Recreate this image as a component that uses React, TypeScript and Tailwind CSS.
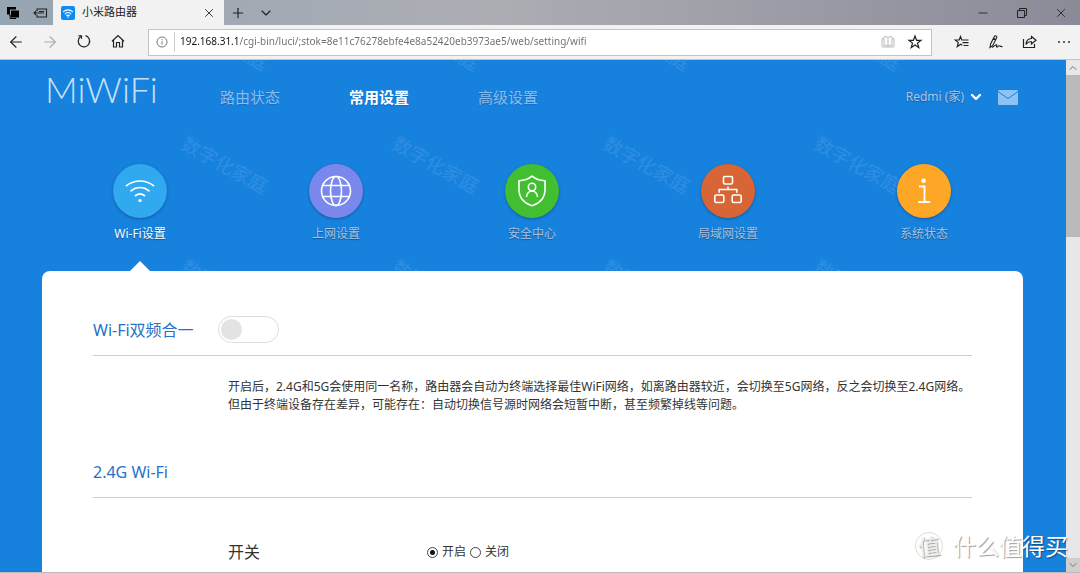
import React from 'react';
import { ArrowLeft, ArrowRight, ChevronDown, ChevronUp, Minus, Plus, X } from 'lucide-react';

interface IconProps {
  className?: string;
}

const TabsIcon: React.FC<IconProps> = ({ className }) => (
  <svg viewBox="0 0 14 14" className={className}>
    <path d="M1 1h9v2.500H4v5H1z" fill="currentColor" />
    <path d="M5 4.500h8v7H5z" fill="currentColor" />
    <path d="M3 9h1.200v3.500H10" fill="none" stroke="currentColor" strokeWidth="1" />
  </svg>
);

const SetAsideIcon: React.FC<IconProps> = ({ className }) => (
  <svg viewBox="0 0 16 14" className={className} fill="none" stroke="currentColor" strokeWidth="1.1">
    <path d="M5 5V3h9.500v8H5V9M7 5.500h5M12 7H2M4.200 4.800L2 7l2.200 2.200" />
  </svg>
);

const Favicon: React.FC<IconProps> = ({ className }) => (
  <svg viewBox="0 0 14 14" className={className}>
    <rect width="14" height="14" rx="2" fill="#0d8bf5" />
    <g fill="none" stroke="#fff" strokeWidth="1.1" strokeLinecap="round">
      <path d="M2.500 5.600a6.800 6.800 0 0 1 9 0M4.200 7.800a4.200 4.200 0 0 1 5.600 0" />
      <path d="M5.700 9.700a2 2 0 0 1 2.600 0" />
    </g>
    <circle cx="7" cy="11" r="0.800" fill="#fff" />
  </svg>
);

const RefreshIcon: React.FC<IconProps> = ({ className }) => (
  <svg viewBox="0 0 16 16" className={className} fill="none" stroke="currentColor" strokeWidth="1.2">
    <path d="M9.500 2.700a5.700 5.700 0 1 1-4.800.800" />
    <path d="M2.500 2.800h3v3" />
  </svg>
);

const HomeIcon: React.FC<IconProps> = ({ className }) => (
  <svg viewBox="0 0 16 16" className={className} fill="none" stroke="currentColor" strokeWidth="1.2">
    <path d="M2 8.200L8 2.500l6 5.700M3.500 7v7h3V9.500h3V14h3V7" />
  </svg>
);

const StarIcon: React.FC<IconProps> = ({ className }) => (
  <svg viewBox="0 0 16 16" className={className} fill="none" stroke="currentColor" strokeWidth="1.2">
    <path d="M8 2l1.600 4.300h4.400l-3.500 2.800 1.300 4.500L8 11l-3.800 2.600 1.300-4.500L2 6.300h4.400z" />
  </svg>
);

const BookIcon: React.FC<IconProps> = ({ className }) => (
  <svg viewBox="0 0 14 14" className={className} fill="none" stroke="currentColor" strokeWidth="1">
    <path d="M7 2.500v9M7 2.500C6 1.500 4 1.500 3 2v8.500c1-.500 3-.500 4 .500 1-1 3-1 4-.500V2c-1-.500-3-.500-4 .500M3 3.500H1v8.500h12V3.500h-2" />
  </svg>
);

const FavoritesIcon: React.FC<IconProps> = ({ className }) => (
  <svg viewBox="0 0 16 16" className={className} fill="none" stroke="currentColor" strokeWidth="1.2">
    <path d="M9.500 6H7.800L6.500 2.500 5.200 6H1.200l3.100 2.600-1.100 4 3.600-2.300 1.500 1M9.500 6H14.500M8.500 8.700h6M9.500 11.500h5" />
  </svg>
);

const PenIcon: React.FC<IconProps> = ({ className }) => (
  <svg viewBox="0 0 16 16" className={className} fill="none" stroke="currentColor" strokeWidth="1.1">
    <path d="M2 13.500l.600-3.500L6.500 2.300c.500-1 2.800.100 2.300 1.200L4.800 11.500zM5.500 4.300l2.300 1.200M4 13.500c2-1 3.500-3 4.500-2.800s-.700 2.300.400 2.300 1.400-1.400 2.300-1.300.800 1.200 3.300.900" />
  </svg>
);

const ShareIcon: React.FC<IconProps> = ({ className }) => (
  <svg viewBox="0 0 16 16" className={className} fill="none" stroke="currentColor" strokeWidth="1.2">
    <path d="M1.500 5v8.500h11V10" />
    <path d="M9.500 2.500l4.500 3.700-4.500 3.700V7.800C7 7.600 5.200 8.500 4 10.500c.200-3.500 2.200-5.800 5.500-6z" />
  </svg>
);

const MailIcon: React.FC<IconProps> = ({ className }) => (
  <svg viewBox="0 0 20 15" className={className}>
    <rect width="20" height="15" rx="1" fill="#8fc3f3" />
    <path d="M0 1.500l10 7 10-7" fill="none" stroke="#1781de" strokeWidth="1" />
  </svg>
);

const WifiGlyph = () => (
  <svg viewBox="0 0 32 32" className="size-8" fill="none" stroke="#fff" strokeWidth="1.7" strokeLinecap="round">
    <path d="M2.500 10.700c8-6.300 19-6.300 27 0M7 15.800c5.400-4.400 12.600-4.400 18 0M11.500 20.600c2.700-2.200 6.300-2.200 9 0" />
    <circle cx="16" cy="25.500" r="1.600" fill="#fff" stroke="none" />
  </svg>
);

const GlobeGlyph = () => (
  <svg viewBox="0 0 32 32" className="size-8" fill="none" stroke="#fff" strokeWidth="1.600">
    <circle cx="16" cy="16" r="14.500" />
    <ellipse cx="16" cy="16" rx="5.500" ry="14.500" />
    <path d="M2.500 10.500h27M2.500 21.500h27" />
  </svg>
);

const ShieldGlyph = () => (
  <svg viewBox="0 0 32 32" className="size-8" fill="none" stroke="#fff" strokeWidth="1.600" strokeLinejoin="round">
    <path d="M16 1.200c3.200 2.600 7 4.300 13 4.600v8.700C29 22 24 28 16 30.800 8 28 3 22 3 14.500V5.800C9 5.500 12.800 3.800 16 1.200z" />
    <circle cx="16" cy="12" r="3.700" />
    <path d="M10.500 22c0-3.500 2.500-6 5.500-6s5.500 2.500 5.500 6" />
  </svg>
);

const LanGlyph = () => (
  <svg viewBox="0 0 32 32" className="size-8" fill="none" stroke="#fff" strokeWidth="1.600">
    <rect x="11.500" y="1.500" width="9" height="7.500" rx="1.500" />
    <rect x="2.800" y="20" width="9" height="7.500" rx="1.500" />
    <rect x="20.200" y="20" width="9" height="7.500" rx="1.500" />
    <path d="M16 11.500v3M7.200 17.800v-3.300h17.600v3.300" />
  </svg>
);

const InfoGlyph = () => (
  <svg viewBox="0 0 32 32" className="size-8" fill="none" stroke="#fff" strokeWidth="1.800">
    <circle cx="15.500" cy="5.800" r="2.300" fill="#fff" stroke="none" />
    <path d="M11 11.500h5.500V27M10.300 27h12" />
  </svg>
);

const menus = [
  { label: '路由状态', active: false },
  { label: '常用设置', active: true },
  { label: '高级设置', active: false }
];

const sections = [
  { label: 'Wi-Fi设置', color: 'bg-[#30a9f0]', icon: WifiGlyph, active: true },
  { label: '上网设置', color: 'bg-[#7a88ee]', icon: GlobeGlyph, active: false },
  { label: '安全中心', color: 'bg-[#41bf31]', icon: ShieldGlyph, active: false },
  { label: '局域网设置', color: 'bg-[#d86536]', icon: LanGlyph, active: false },
  { label: '系统状态', color: 'bg-[#fea726]', icon: InfoGlyph, active: false }
];

const TitleBar = () => (
  <div className="flex h-[25px] shrink-0 items-center bg-linear-to-r from-[#96a5b2] via-[#adaeb4] via-45% to-[#8b8b98] text-[#222]">
    <div className="flex w-[53px] items-center gap-3 pl-[6px]">
      <button aria-label="标签页"><TabsIcon className="size-[14px] text-black" /></button>
      <button aria-label="搁置标签页"><SetAsideIcon className="h-[14px] w-4" /></button>
    </div>
    <div className="flex h-full w-[171px] items-center bg-[#f2f2f2] px-2">
      <Favicon className="size-[14px]" />
      <span className="ml-[7px] flex-1 text-[11px]">小米路由器</span>
      <button aria-label="关闭标签页"><X className="size-[14px]" strokeWidth={1.5} /></button>
    </div>
    <div className="flex flex-1 items-center gap-3 pl-[6px]">
      <button aria-label="新建标签页"><Plus className="size-4" strokeWidth={1.75} /></button>
      <button aria-label="标签预览"><ChevronDown className="size-4" strokeWidth={1.75} /></button>
    </div>
    <div className="flex items-center gap-[25px] pr-3">
      <button aria-label="最小化"><Minus className="size-[14px]" strokeWidth={1.5} /></button>
      <button aria-label="还原">
        <svg viewBox="0 0 14 14" className="size-[14px]" fill="none" stroke="currentColor">
          <path d="M2.500 4.500h7v7h-7zM4.500 4.500v-2h7v7h-2" />
        </svg>
      </button>
      <button aria-label="关闭"><X className="size-[14px]" strokeWidth={1.5} /></button>
    </div>
  </div>
);

const toolButton = 'flex w-5 justify-center';

const ToolBar = () => (
  <div className="flex h-[35px] shrink-0 items-center border-b border-[#c3c6c9] bg-[#f2f2f2] px-[6px] text-[#222]">
    <div className="flex gap-[14px]">
      <button aria-label="后退" className={toolButton}><ArrowLeft className="size-[18px]" strokeWidth={1.5} /></button>
      <button aria-label="前进" className={`${toolButton} text-[#aaa]`}><ArrowRight className="size-[18px]" strokeWidth={1.5} /></button>
      <button aria-label="刷新" className={toolButton}><RefreshIcon className="size-4" /></button>
      <button aria-label="主页" className={toolButton}><HomeIcon className="size-4" /></button>
    </div>
    <div className="mx-5 flex h-[27px] flex-1 items-center border border-[#c4c4c4] bg-white">
      <span className="flex h-5 w-[26px] items-center justify-center border-r border-[#ccc] text-[#777]">
        <svg viewBox="0 0 12 12" className="size-3" fill="none" stroke="currentColor">
          <circle cx="6" cy="6" r="5" />
          <path d="M6 5.200v3.500M6 3.200v1" />
        </svg>
      </span>
      <input
        aria-label="地址"
        className="min-w-0 flex-1 bg-linear-[90deg,#111_64px,#6d6d6d_64px] bg-clip-text pb-[2px] pl-[5px] text-[10px] text-transparent outline-none"
        defaultValue="192.168.31.1/cgi-bin/luci/;stok=8e11c76278ebfe4e8a52420eb3973ae5/web/setting/wifi"
      />
      <div className="flex items-center gap-3 pr-2">
        <button aria-label="阅读视图"><BookIcon className="size-[14px] text-[#bbb]" /></button>
        <button aria-label="收藏"><StarIcon className="size-4" /></button>
      </div>
    </div>
    <div className="flex gap-[14px]">
      <button aria-label="收藏夹" className={toolButton}><FavoritesIcon className="size-4" /></button>
      <button aria-label="笔记" className={toolButton}><PenIcon className="size-4" /></button>
      <button aria-label="共享" className={toolButton}><ShareIcon className="size-4" /></button>
      <button aria-label="更多" className={toolButton}>
        <svg viewBox="0 0 16 16" className="size-4" fill="currentColor">
          <circle cx="3" cy="8" r="0.900" />
          <circle cx="8" cy="8" r="0.900" />
          <circle cx="13" cy="8" r="0.900" />
        </svg>
      </button>
    </div>
  </div>
);

/* Faint diagonal stamp repeated behind the page content */
const Stamps = () => (
  <div aria-hidden className="pointer-events-none absolute inset-x-0 -top-[91px] grid grid-cols-[repeat(4,211px)] pl-[172px] text-white/10">
    {Array.from({ length: 12 }, (_, i) => (
      <div key={i} className="flex h-[123px] w-[105px] items-center justify-center pt-6">
        <span className="rotate-29 text-[19px] whitespace-nowrap">数字化家庭</span>
      </div>
    ))}
  </div>
);

const ScrollBar = () => (
  <div className="flex w-[14px] shrink-0 flex-col bg-[#e7e7e7] text-[#777]">
    <button aria-label="向上滚动" className="flex h-[15px] items-center justify-center"><ChevronUp className="size-3" strokeWidth={2} /></button>
    <div className="h-[162px] bg-[#bababa]" />
    <button aria-label="向下滚动" className="mt-auto flex h-[14px] items-center justify-center bg-[#cfcfcf]"><ChevronDown className="size-3" strokeWidth={2} /></button>
  </div>
);

const Header = () => (
  <header className="relative flex h-[74px] items-center pr-12 pl-[45px]">
    <a href="#home" className="w-[175px] pb-4 font-['Lato'] text-[36px] leading-9 font-light text-[#c5e0f8]">MiWiFi</a>
    <nav className="flex flex-1 gap-[69px] text-[15px] text-shadow-[0_1px_1px_rgb(0_0_0/0.15)]">
      {menus.map((menu) => (
        <a key={menu.label} href="#menu" className={menu.active ? 'font-bold text-white' : 'text-[#86bdef]'}>{menu.label}</a>
      ))}
    </nav>
    <button className="flex items-center gap-1 text-[12px] text-[#a9c6e6] text-shadow-[0_1px_1px_rgb(0_0_0/0.3)]">
      Redmi (家)
      <ChevronDown className="size-4 text-white" strokeWidth={3.5} />
    </button>
    <button aria-label="消息" className="ml-[14px]"><MailIcon className="h-[15px] w-5" /></button>
  </header>
);

const SectionTabs = () => (
  <nav className="relative mr-[44px] ml-[42px] grid grid-cols-5 pt-[30px]">
    {sections.map((section) => (
      <a key={section.label} href="#section" className="flex flex-col items-center">
        <span className={`flex size-[54px] items-center justify-center rounded-full shadow-[0_1px_3px_rgb(0_0_0/0.3)] ${section.color}`}>
          <section.icon />
        </span>
        <span className={`mt-[7px] text-[12px] leading-[18px] text-shadow-[0_1px_1px_rgb(0_0_0/0.35)] ${section.active ? 'text-white' : 'text-[#a5c2e0]'}`}>
          {section.label}
        </span>
        <svg viewBox="0 0 20 10" className={`mt-[18px] h-[10px] w-5 ${section.active ? '' : 'invisible'}`}>
          <path d="M10 0l10 10H0z" fill="#fff" />
        </svg>
      </a>
    ))}
  </nav>
);

const SettingsPanel = () => (
  <main className="relative mr-[43px] ml-[42px] flex-1 rounded-t-lg bg-white px-[51px] pt-[33px] text-[#333]">
    <section>
      <div className="flex h-[52px] items-center gap-6 border-b border-[#ccc]">
        <label htmlFor="smart-connect" className="text-[16px] text-[#2572c8]">Wi-Fi双频合一</label>
        <input
          id="smart-connect"
          type="checkbox"
          className="flex h-[27px] w-[61px] appearance-none items-center rounded-full border border-[#ddd] px-[2px] before:size-[21px] before:rounded-full before:bg-[#e3e3e3]"
        />
      </div>
      <p className="mt-[22px] pl-[135px] text-[12px] leading-[18px] whitespace-nowrap">
        开启后，2.4G和5G会使用同一名称，路由器会自动为终端选择最佳WiFi网络，如离路由器较近，会切换至5G网络，反之会切换至2.4G网络。
        <br />
        但由于终端设备存在差异，可能存在：自动切换信号源时网络会短暂中断，甚至频繁掉线等问题。
      </p>
    </section>

    <section className="mt-8">
      <h2 className="flex h-[52px] items-center border-b border-[#ccc] text-[16px] text-[#2572c8]">2.4G Wi-Fi</h2>
      <fieldset className="mt-[42px] flex items-center pl-[135px]">
        <legend className="float-left w-[199px] text-[16px]">开关</legend>
        <div className="flex items-center gap-1 text-[12px]">
          <input id="wifi-on" type="radio" name="wifi" defaultChecked className="flex size-[11px] appearance-none items-center justify-center rounded-full border border-[#444] before:size-[5px] before:rounded-full checked:before:bg-[#111]" />
          <label htmlFor="wifi-on">开启</label>
          <input id="wifi-off" type="radio" name="wifi" className="flex size-[11px] appearance-none items-center justify-center rounded-full border border-[#444] before:size-[5px] before:rounded-full checked:before:bg-[#111]" />
          <label htmlFor="wifi-off">关闭</label>
        </div>
      </fieldset>
    </section>
  </main>
);

const SiteMark = () => (
  <div aria-hidden className="pointer-events-none absolute right-3 bottom-3 flex items-center gap-[10px] text-white text-shadow-[1px_1px_1px_rgb(0_0_0/0.4)]">
    <span className="flex size-7 items-center justify-center rounded-full border border-[#ddd]">
      <span className="-rotate-6 text-[22px] leading-7 text-[#eee]">值</span>
    </span>
    <span className="text-[23px] leading-7">什么值得买</span>
  </div>
);

const App: React.FC = () => {
  return (
    <div className="relative flex h-screen flex-col overflow-hidden border-b border-[#bbb] font-['Noto_Sans','Noto_Sans_CJK_SC',sans-serif]">
      <TitleBar />
      <ToolBar />
      <div className="flex min-h-0 flex-1">
        <div className="relative flex min-w-0 flex-1 flex-col overflow-hidden bg-[#1781de]">
          <Stamps />
          <Header />
          <SectionTabs />
          <SettingsPanel />
        </div>
        <ScrollBar />
      </div>
      <SiteMark />
    </div>
  );
};

export default App;
